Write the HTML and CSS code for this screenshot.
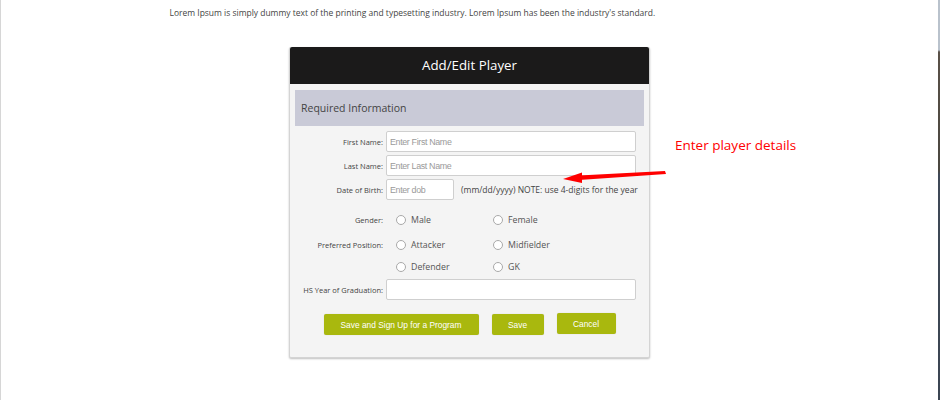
FILE: index.html
```html
<!DOCTYPE html>
<html>
<head>
<meta charset="utf-8">
<link rel="stylesheet" href="styles.css">
</head>
<body>
<div class="frame">
  <main class="page">
    <p class="intro">Lorem Ipsum is simply dummy text of the printing and typesetting industry. Lorem Ipsum has been the industry's standard.</p>
    <section class="card">
      <header class="card-head">Add/Edit Player</header>
      <div class="band">Required Information</div>
      <form class="form">
        <div class="row">
          <label class="lbl">First Name:</label>
          <input class="field" type="text" placeholder="Enter First Name">
        </div>
        <div class="row">
          <label class="lbl">Last Name:</label>
          <input class="field" type="text" placeholder="Enter Last Name">
        </div>
        <div class="row">
          <label class="lbl">Date of Birth:</label>
          <input class="field dob" type="text" placeholder="Enter dob">
          <span class="note">(mm/dd/yyyy) NOTE: use 4-digits for the year</span>
        </div>
        <div class="row radio-row gender">
          <label class="lbl">Gender:</label>
          <span class="opt"><span class="radio"></span>Male</span>
          <span class="opt"><span class="radio"></span>Female</span>
        </div>
        <div class="row radio-row pos">
          <label class="lbl">Preferred Position:</label>
          <span class="opt"><span class="radio"></span>Attacker</span>
          <span class="opt"><span class="radio"></span>Midfielder</span>
        </div>
        <div class="row radio-row pos2">
          <label class="lbl"></label>
          <span class="opt"><span class="radio"></span>Defender</span>
          <span class="opt"><span class="radio"></span>GK</span>
        </div>
        <div class="row hs">
          <label class="lbl">HS Year of Graduation:</label>
          <input class="field" type="text">
        </div>
        <div class="buttons">
          <button type="button" class="btn wide">Save and Sign Up for a Program</button>
          <button type="button" class="btn save">Save</button>
          <button type="button" class="btn cancel">Cancel</button>
        </div>
      </form>
    </section>
    <div class="annot">Enter player details</div>
    <svg class="arrow" width="110" height="16" viewBox="0 0 110 16">
      <polygon points="16,5.5 102,1 103,4 16,10" fill="#f00"/>
      <polygon points="0,9 19,2.5 19,13" fill="#f00"/>
    </svg>
  </main>
  <aside class="edge"></aside>
</div>
</body>
</html>
```
FILE: styles.css
```css
html, body {
  margin: 0;
  padding: 0;
  background: #fff;
}
body {
  font-family: "Open Sans", "DejaVu Sans", sans-serif;
  color: #444;
}
.frame {
  display: flex;
  width: 940px;
  height: 400px;
  overflow: hidden;
}
.page {
  flex: 1;
  position: relative;
  border-left: 1px solid #d6d6d6;
}
.edge {
  width: 2px;
  background: linear-gradient(#b9c2cc 0, #b9c2cc 50px, #5a5148 52px, #4a4740 170px, #3f4957 175px, #3b4552 400px);
}
.intro {
  width: 600px;
  margin: 0 auto;
  padding: 6px 0 0 0;
  box-sizing: border-box;
  font-size: 8.48px;
  line-height: 14px;
  color: #444;
}
.card {
  width: 359px;
  margin: 27px auto 0;
  background: #f4f4f4;
  border: 1px solid #d4d4d4;
  border-top: none;
  border-radius: 2px;
  box-shadow: 0 1px 2px rgba(0,0,0,0.25);
  padding-bottom: 22px;
}
.card-head {
  background: #1b1a1a;
  color: #fff;
  text-align: center;
  font-size: 13.3px;
  height: 37px;
  line-height: 37px;
  border-radius: 2px 2px 0 0;
}
.band {
  margin: 6px 5px 0 5px;
  height: 36px;
  line-height: 36px;
  background: #c9cad7;
  color: #444;
  font-size: 10.5px;
  padding-left: 6px;
}
.form {
  padding: 0 13px 0 5px;
  margin: 0;
}
.row {
  display: flex;
  align-items: center;
  height: 21px;
  margin-top: 3px;
}
.row:first-child {
  margin-top: 5px;
}
.lbl {
  width: 88px;
  flex: none;
  text-align: right;
  font-size: 7.5px;
  color: #444;
  margin-right: 3px;
}
.field {
  flex: 1;
  height: 21px;
  box-sizing: border-box;
  border: 1px solid #cfcfcf;
  border-radius: 2px;
  background: #fff;
  font-family: "Liberation Sans", Arial, sans-serif;
  font-size: 8.9px;
  letter-spacing: -0.35px;
  padding: 0 3px;
  margin: 0;
  outline: none;
}
.field::placeholder {
  color: #9a9a9a;
}
.field.dob {
  flex: none;
  width: 68px;
}
.note {
  margin-left: 7px;
  font-size: 8.5px;
  color: #444;
  white-space: nowrap;
}
.gender {
  margin-top: 9px;
}
.pos {
  margin-top: 4px;
  height: 22px;
}
.pos2 {
  margin-top: 0;
  height: 22px;
}
.hs {
  margin-top: 1px;
  height: 21px;
}
.opt {
  width: 97px;
  flex: none;
  display: flex;
  align-items: center;
  font-size: 8.8px;
  color: #555;
  padding-left: 10px;
  box-sizing: border-box;
}
.radio {
  width: 8px;
  height: 8px;
  border: 1px solid #a9a9a9;
  border-radius: 50%;
  background: #fff;
  margin-right: 5px;
  flex: none;
}
.buttons {
  display: flex;
  justify-content: center;
  align-items: flex-start;
  gap: 13px;
  margin-top: 14px;
  padding-left: 8px;
}
.btn {
  height: 21px;
  border: none;
  border-radius: 2px;
  background: #a9b80e;
  color: #fff;
  font-family: "Liberation Sans", Arial, sans-serif;
  font-size: 8.4px;
  padding: 0;
  margin: 0;
  box-shadow: 0 0 1px rgba(0,0,0,0.2);
}
.btn.wide { width: 155px; }
.btn.save { width: 52px; }
.btn.cancel { width: 59px; margin-top: -1px; }
.annot {
  position: absolute;
  left: 674px;
  top: 136px;
  font-size: 13.5px;
  color: #f00;
  line-height: 18px;
}
.arrow {
  position: absolute;
  left: 562px;
  top: 170px;
}
```
